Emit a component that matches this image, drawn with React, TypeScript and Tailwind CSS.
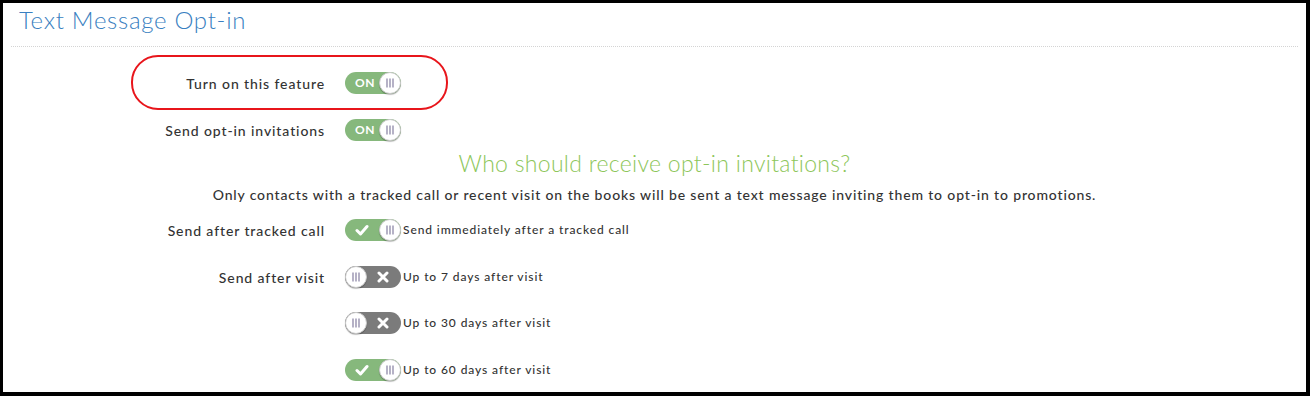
import React from 'react';

type ToggleKind = 'on' | 'check' | 'off';

// knob with the three grip lines
function Knob() {
  return (
    <span className="flex h-[22px] w-[22px] items-center justify-center rounded-full border border-[#c9c9c9] bg-white shadow-[0_1px_1px_rgba(0,0,0,0.25)]">
      <svg width="10" height="10" viewBox="0 0 10 10">
        <path d="M2 0.5v9M5 0.5v9M8 0.5v9" stroke="#8f89a8" strokeWidth="1.3" />
      </svg>
    </span>
  );
}

function Toggle({ kind }: { kind: ToggleKind }) {
  if (kind === 'off') {
    return (
      <div className="flex h-[22px] w-[56px] items-center justify-between rounded-full bg-[#7b7b7b]">
        <Knob />
        <svg width="12" height="12" viewBox="0 0 12 12" className="mr-[12px]">
          <path d="M2 2l8 8M10 2l-8 8" stroke="#fff" strokeWidth="3" strokeLinecap="round" />
        </svg>
      </div>
    );
  }
  return (
    <div className="flex h-[22px] w-[56px] items-center justify-between rounded-full bg-[#86b87c]">
      {kind === 'on' ? (
        <span className="ml-[10px] text-[12px] font-bold leading-none tracking-[0.5px] text-white">ON</span>
      ) : (
        <svg width="14" height="12" viewBox="0 0 14 12" className="ml-[10px]">
          <path d="M2 6.5l3.5 3.5L12 2.5" stroke="#fff" strokeWidth="3" fill="none" strokeLinecap="round" strokeLinejoin="round" />
        </svg>
      )}
      <Knob />
    </div>
  );
}

function Row({ label, kind, text, className = '' }: { label?: string; kind: ToggleKind; text?: string; className?: string }) {
  return (
    <div className={`flex h-[24px] items-center ${className}`}>
      <div className="w-[322px] text-right text-[14px] font-medium tracking-[0.9px] text-[#333]">{label}</div>
      <div className="ml-[20px]">
        <Toggle kind={kind} />
      </div>
      {text && <span className="ml-[2px] text-[12px] font-medium tracking-[0.9px] text-[#333]">{text}</span>}
    </div>
  );
}

export default function App() {
  return (
    <div className="h-[396px] w-[1310px] bg-black pb-[4px] pl-[3px] pr-[4px] pt-[3px] font-['Lato','Open_Sans',sans-serif]">
      <div className="relative h-full w-full bg-white">
        <div className="mx-[8px] border-b border-dotted border-[#d4d4d4] pb-[11px] pl-[8px] pt-[2px]">
          <h1 className="text-[24px] font-light leading-[30px] tracking-[0.7px] text-[#3a7fc1]">Text Message Opt-in</h1>
        </div>

        {/* red annotation around the first switch */}
        <div className="absolute left-[128px] top-[52px] h-[55px] w-[317px] rounded-[27px] border-2 border-[#e8151b]" />

        <Row label="Turn on this feature" kind="on" className="mt-[24px]" />
        <Row label="Send opt-in invitations" kind="on" className="mt-[23px]" />

        <h2 className="mt-[8px] text-center text-[23px] font-light leading-[26px] tracking-[0.3px] text-[#8dc65a]">
          Who should receive opt-in invitations?
        </h2>
        <p className="mt-[10px] text-center text-[14px] font-medium leading-[18px] tracking-[0.85px] text-[#333]">
          Only contacts with a tracked call or recent visit on the books will be sent a text message inviting them to opt-in to promotions.
        </p>

        <Row label="Send after tracked call" kind="check" text="Send immediately after a tracked call" className="mt-[14px]" />
        <Row label="Send after visit" kind="off" text="Up to 7 days after visit" className="mt-[23px]" />
        <Row kind="off" text="Up to 30 days after visit" className="mt-[22px]" />
        <Row kind="check" text="Up to 60 days after visit" className="mt-[23px]" />
      </div>
    </div>
  );
}
